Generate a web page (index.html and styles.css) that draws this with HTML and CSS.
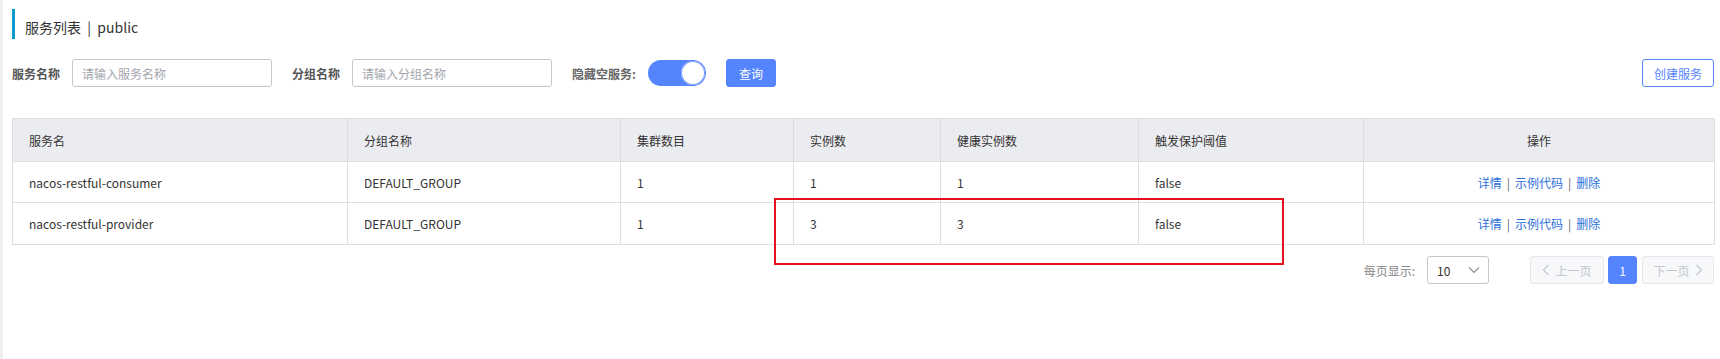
FILE: index.html
```html
<!DOCTYPE html>
<html lang="zh-CN">
<head>
<meta charset="utf-8">
<title>服务列表</title>
<link rel="stylesheet" href="styles.css">
</head>
<body>
<div class="page">
  <div class="content">
    <div class="title">服务列表 &nbsp;|&nbsp; public</div>

    <div class="filters">
      <div class="filter-group">
        <span class="label">服务名称</span>
        <input class="input" type="text" placeholder="请输入服务名称">
        <span class="label gap-left">分组名称</span>
        <input class="input" type="text" placeholder="请输入分组名称">
        <span class="label light gap-left">隐藏空服务:</span>
        <span class="switch"><span class="knob"></span></span>
        <button class="btn primary">查询</button>
      </div>
      <button class="btn outline">创建服务</button>
    </div>

    <table class="grid">
      <colgroup>
        <col style="width:335px">
        <col style="width:273px">
        <col style="width:173px">
        <col style="width:147px">
        <col style="width:198px">
        <col style="width:225px">
        <col style="width:351px">
      </colgroup>
      <thead>
        <tr>
          <th>服务名</th>
          <th>分组名称</th>
          <th>集群数目</th>
          <th>实例数</th>
          <th>健康实例数</th>
          <th>触发保护阈值</th>
          <th class="center">操作</th>
        </tr>
      </thead>
      <tbody>
        <tr>
          <td>nacos-restful-consumer</td>
          <td>DEFAULT_GROUP</td>
          <td>1</td>
          <td>1</td>
          <td>1</td>
          <td>false</td>
          <td class="center"><a class="link">详情</a><span class="sep">|</span><a class="link">示例代码</a><span class="sep">|</span><a class="link">删除</a></td>
        </tr>
        <tr class="row2">
          <td>nacos-restful-provider</td>
          <td>DEFAULT_GROUP</td>
          <td>1</td>
          <td>3</td>
          <td>3</td>
          <td>false</td>
          <td class="center"><a class="link">详情</a><span class="sep">|</span><a class="link">示例代码</a><span class="sep">|</span><a class="link">删除</a></td>
        </tr>
      </tbody>
    </table>

    <div class="pager">
      <span class="pager-label">每页显示:</span>
      <div class="select">
        <span>10</span>
        <svg class="chev" width="12" height="8" viewBox="0 0 12 8"><path d="M1 1.5 L6 6.5 L11 1.5" fill="none" stroke="#8a8d96" stroke-width="1.1"/></svg>
      </div>
      <div class="pages">
        <button class="pbtn disabled"><svg width="8" height="12" viewBox="0 0 8 12"><path d="M6.5 1 L1.5 6 L6.5 11" fill="none" stroke="#c4c6cf" stroke-width="1.2"/></svg>上一页</button>
        <button class="pbtn current">1</button>
        <button class="pbtn disabled">下一页<svg width="8" height="12" viewBox="0 0 8 12"><path d="M1.5 1 L6.5 6 L1.5 11" fill="none" stroke="#c4c6cf" stroke-width="1.2"/></svg></button>
      </div>
    </div>
  </div>
  <div class="annotation"></div>
</div>
</body>
</html>
```

FILE: styles.css
```css
* { box-sizing: border-box; }
html, body {
  margin: 0;
  padding: 0;
  background: #fff;
}
body {
  font-family: "Noto Sans CJK SC", "Noto Sans", sans-serif;
  font-size: 12px;
  color: #333;
}
.page {
  position: relative;
  width: 1720px;
  height: 359px;
  border-left: 3px solid #eef0f4;
}
.content {
  padding: 9px 6px 0 9px;
}
.title {
  height: 30px;
  border-left: 3px solid #0d9ad2;
  padding-left: 10px;
  padding-top: 8px;
  font-size: 14px;
  line-height: 20px;
  color: #333;
}
.filters {
  margin-top: 20px;
  display: flex;
  align-items: center;
  justify-content: space-between;
  height: 28px;
}
.filter-group {
  display: flex;
  align-items: center;
}
.label {
  font-weight: bold;
  color: #555;
  font-size: 12px;
  margin-right: 12px;
}
.label.light {
  color: #666;
  margin-right: 12px;
}
.gap-left { margin-left: 20px; }
.label.light.gap-left { margin-left: 20px; }
.input {
  width: 200px;
  height: 28px;
  border: 1px solid #c4c6cf;
  border-radius: 3px;
  padding: 0 9px;
  font-family: inherit;
  font-size: 12px;
  color: #333;
  outline: none;
}
.input::placeholder { color: #a3a5ab; }
.switch {
  display: inline-flex;
  align-items: center;
  justify-content: flex-end;
  width: 58px;
  height: 26px;
  border-radius: 13px;
  background: #5584ff;
  padding: 1px;
}
.knob {
  width: 24px;
  height: 24px;
  border-radius: 50%;
  background: #fff;
  box-shadow: 0 0 0 1px #7a9dff inset;
}
.btn {
  height: 28px;
  border-radius: 3px;
  font-family: inherit;
  font-size: 12px;
  cursor: pointer;
  padding: 0;
}
.btn.primary {
  margin-left: 20px;
  width: 50px;
  background: #5584ff;
  border: 1px solid #5584ff;
  color: #fff;
}
.btn.outline {
  width: 72px;
  background: #fff;
  border: 1px solid #5584ff;
  color: #5584ff;
}
.grid {
  margin-top: 31px;
  width: 1702px;
  border-collapse: collapse;
  table-layout: fixed;
}
.grid th, .grid td {
  border: 1px solid #dcdee3;
  padding: 0 16px;
  text-align: left;
  font-size: 12px;
  color: #333;
  white-space: nowrap;
}
.grid th {
  background: #ebecf0;
  font-weight: normal;
  height: 43px;
}
.grid td {
  height: 41px;
}
.grid tr.row2 td { height: 42px; }
.grid .center { text-align: center; }
.link {
  color: #2a6fdb;
  cursor: pointer;
}
.sep {
  color: #666;
  margin: 0 5px;
}
.pager {
  margin-top: 11px;
  display: flex;
  justify-content: flex-end;
  align-items: center;
  height: 28px;
}
.pager-label {
  color: #888;
  margin-right: 12px;
}
.select {
  width: 62px;
  height: 28px;
  border: 1px solid #c4c6cf;
  border-radius: 3px;
  display: flex;
  align-items: center;
  justify-content: space-between;
  padding: 0 8px 0 9px;
  color: #333;
  font-size: 12px;
}
.pages {
  display: flex;
  align-items: center;
  margin-left: 41px;
}
.pbtn {
  height: 28px;
  border-radius: 3px;
  font-family: inherit;
  font-size: 12px;
  display: inline-flex;
  align-items: center;
  justify-content: center;
  gap: 5px;
  padding: 0;
}
.pbtn.disabled {
  width: 74px;
  background: #f7f8fa;
  border: 1px solid #e6e7eb;
  color: #c4c6cf;
}
.pbtn.disabled:last-child { width: 72px; }
.pbtn.current {
  width: 29px;
  margin: 0 5px 0 4px;
  background: #5584ff;
  border: 1px solid #5584ff;
  color: #fff;
}
.annotation {
  position: absolute;
  left: 771px;
  top: 198px;
  width: 510px;
  height: 67px;
  border: 2px solid #e3141e;
}
```
